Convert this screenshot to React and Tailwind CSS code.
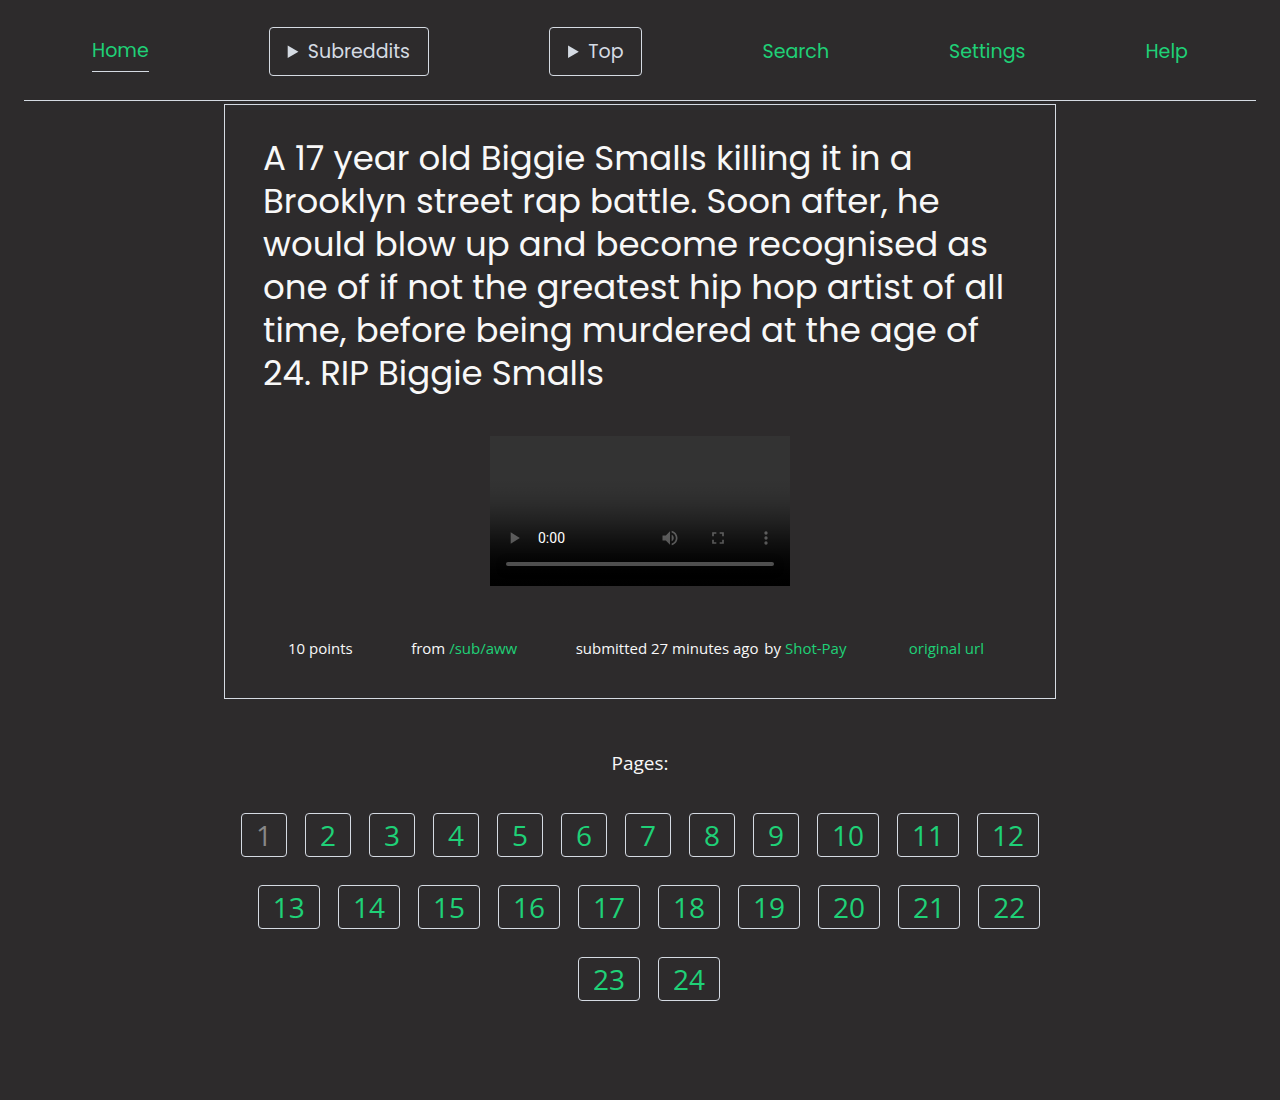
const navLink = "text-[#1fd177]";
const menu =
  "cursor-pointer rounded border border-[#d5dbe3] px-[18px] py-2.5 text-[#d5dbe3]";
const pageBox =
  "block rounded border border-[#d5dbe3] px-3.5 text-[28px] leading-[42px]";

function Menu({ label, items }) {
  return (
    <details className="relative">
      <summary className={menu}>{label}</summary>
      <ul className="absolute left-0 top-full z-10 mt-1 w-full border border-[#d5dbe3] bg-[#2d2b2c] p-3">
        {items.map((item) => (
          <li key={item}>
            <a href={"#" + item} className={navLink}>
              {item}
            </a>
          </li>
        ))}
      </ul>
    </details>
  );
}

function Header() {
  return (
    <header className="px-6">
      <nav className="flex items-center justify-around border-b border-[#d5dbe3] px-2 pb-6 pt-[27px] font-['Poppins','Inter',sans-serif] text-[19px] leading-[27px]">
        <a href="#home" className="border-b border-[#d5dbe3] pb-[7px] pt-1.5 text-[#1fd177]">
          Home
        </a>
        <Menu label="Subreddits" items={["aww", "pics", "videos"]} />
        <Menu label="Top" items={["day", "week", "all"]} />
        <a href="#search" className={navLink}>
          Search
        </a>
        <a href="#settings" className={navLink}>
          Settings
        </a>
        <a href="#help" className={navLink}>
          Help
        </a>
      </nav>
    </header>
  );
}

function Post() {
  return (
    <article className="mx-auto mt-[3px] max-w-[832px] border border-[#d5dbe3] px-[38px] pb-[39px] pt-8">
      <h1 className="font-['Poppins','Inter',sans-serif] text-[34px] leading-[43px]">
        A 17 year old Biggie Smalls killing it in a Brooklyn street rap battle. Soon after, he
        would blow up and become recognised as one of if not the greatest hip hop artist of all
        time, before being murdered at the age of 24. RIP Biggie Smalls
      </h1>
      <video controls className="mx-auto mt-[41px] h-[150px] w-[300px]" />
      <div className="mt-[52px] flex justify-between pl-[25px] pr-[33px] text-[15px] leading-[21px]">
        <p>10 points</p>
        <p>
          from{" "}
          <a href="#aww" className={navLink}>
            /sub/aww
          </a>
        </p>
        <p>
          submitted <time className="mr-0.5">27 minutes ago</time> by{" "}
          <a href="#author" className={navLink}>
            Shot-Pay
          </a>
          &nbsp;
        </p>
        <a href="#original" className={navLink}>
          original url
        </a>
      </div>
    </article>
  );
}

function Pages() {
  const pages = Array.from({ length: 24 }, (_, i) => i + 1);
  return (
    <nav aria-label="Pages" className="mx-auto mt-[50px] max-w-[832px] pb-[99px] text-center">
      <h2 className="text-[19px] leading-7">Pages:</h2>
      <ul className="mt-9 flex flex-wrap justify-center gap-y-7">
        {pages.map((n) => (
          <li key={n} className="ml-[18px] first:ml-0">
            {n === 1 ? (
              <span aria-current="page" className={pageBox + " text-[#888888]"}>
                {n}
              </span>
            ) : (
              <a href={"#page-" + n} className={pageBox + " text-[#1fd177]"}>
                {n}
              </a>
            )}
          </li>
        ))}
      </ul>
    </nav>
  );
}

export default function App() {
  return (
    <div className="min-h-screen bg-[#2d2b2c] font-['Open_Sans',sans-serif] text-[#f8f8f8]">
      <Header />
      <main>
        <Post />
        <Pages />
      </main>
    </div>
  );
}
